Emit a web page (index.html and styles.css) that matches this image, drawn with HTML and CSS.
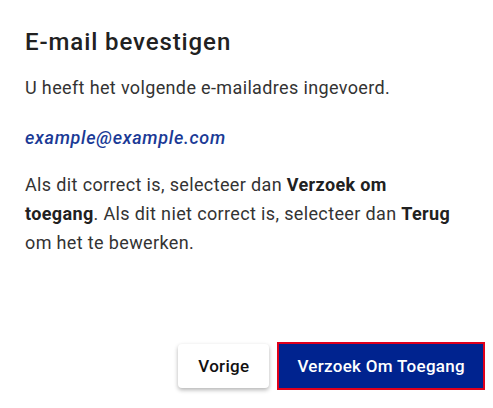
FILE: index.html
```html
<!DOCTYPE html>
<html lang="nl">
<head>
<meta charset="utf-8">
<link rel="stylesheet" href="styles.css">
</head>
<body>
<div class="dialog">
  <div class="content">
    <h1 class="title">E-mail bevestigen</h1>
    <p class="intro">U heeft het volgende e-mailadres ingevoerd.</p>
    <p class="email">example@example.com</p>
    <p class="para">Als dit correct is, selecteer dan <b>Verzoek om toegang</b>. Als dit niet correct is, selecteer dan <b>Terug</b> om het te bewerken.</p>
  </div>
  <div class="actions">
    <button class="btn btn-secondary">Vorige</button>
    <button class="btn btn-primary">Verzoek Om Toegang</button>
  </div>
</div>
</body>
</html>
```
FILE: styles.css
```css
html, body {
  margin: 0;
  padding: 0;
  background: #ffffff;
}
body {
  font-family: Roboto, "Liberation Sans", sans-serif;
  color: #212121;
}
.dialog {
  width: 493px;
  height: 408px;
  display: flex;
  flex-direction: column;
  box-sizing: border-box;
}
.content {
  padding: 26.8px 35px 0 25px;
  flex: 1;
}
.title {
  margin: 0;
  font-size: 24px;
  line-height: 30px;
  font-weight: 500;
  color: #212121;
  letter-spacing: 0.9px;
}
.intro {
  margin: 19.05px 0 0 0;
  font-size: 18px;
  line-height: 24px;
  letter-spacing: 0.36px;
  color: #333333;
}
.email {
  margin: 26px 0 0 0;
  font-size: 18px;
  line-height: 24px;
  font-style: italic;
  font-weight: 500;
  letter-spacing: 0.7px;
  color: #1a3a96;
}
.para {
  margin: 20.5px 0 0 0;
  font-size: 18px;
  line-height: 29px;
  letter-spacing: 0.36px;
  color: #333333;
}
.para b {
  font-weight: 700;
  color: #212121;
}
.actions {
  display: flex;
  justify-content: flex-end;
  gap: 10px;
  padding: 0 10px 20px 0;
}
.btn {
  height: 44px;
  border: none;
  border-radius: 4px;
  font-family: Roboto, "Liberation Sans", sans-serif;
  font-size: 17px;
  font-weight: 500;
  letter-spacing: 0.3px;
  padding: 0 20px;
  cursor: pointer;
}
.btn-secondary {
  background: #ffffff;
  color: #111111;
  box-shadow: 0 2px 4px rgba(0, 0, 0, 0.3);
}
.btn-primary {
  background: #00238f;
  color: #ffffff;
  border-radius: 0;
  outline: 2px solid #e0001b;
  padding: 0 18px;
}
```
